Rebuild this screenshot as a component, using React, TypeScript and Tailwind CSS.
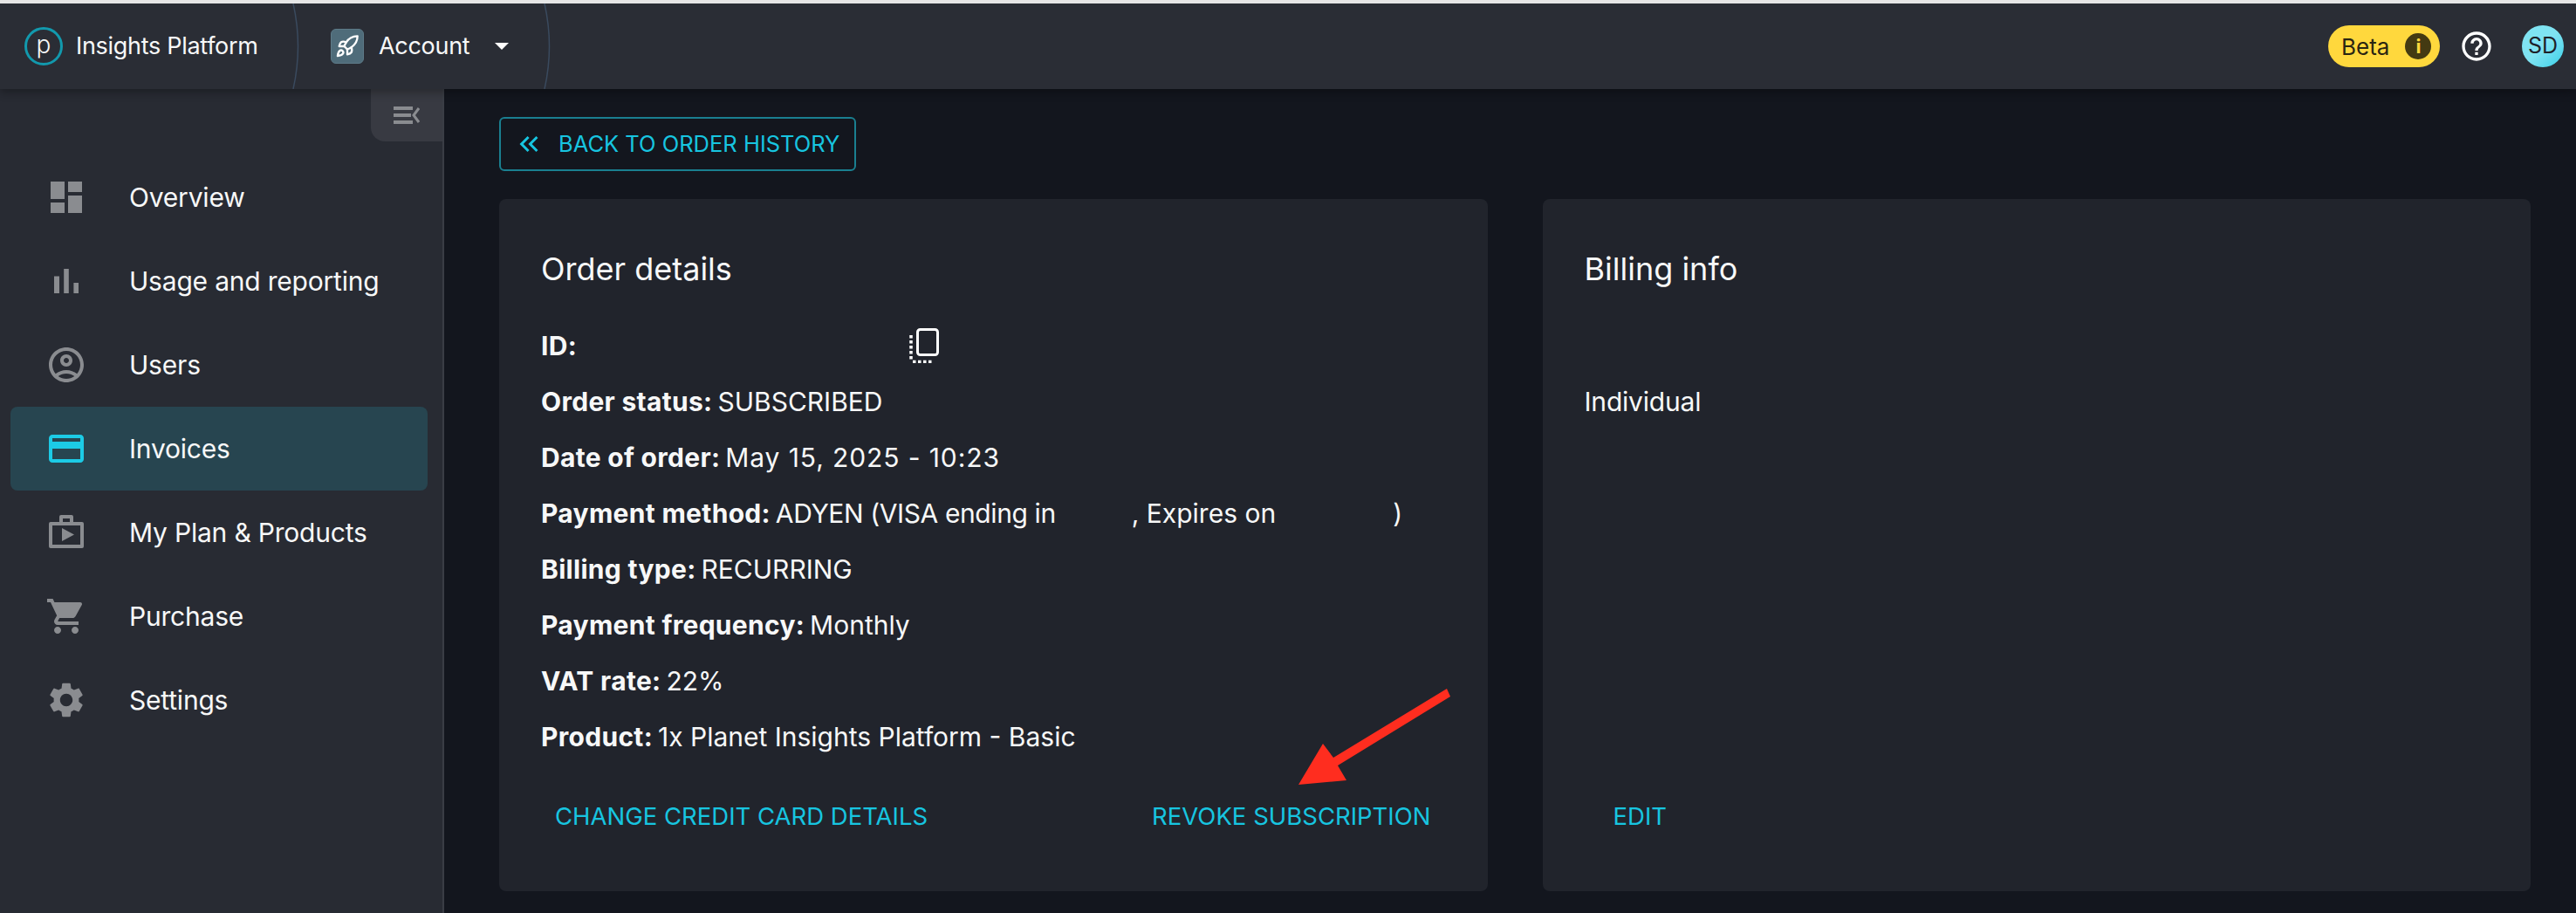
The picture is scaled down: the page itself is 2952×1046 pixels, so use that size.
import React from 'react';
import { Rocket } from 'lucide-react';

const navItems = [
  { label: 'Overview', d: 'M3 13h8V3H3v10zm0 8h8v-6H3v6zm10 0h8V11h-8v10zm0-18v6h8V3h-8z' },
  { label: 'Usage and reporting', d: 'M5 9.2h3V19H5zM10.6 5h2.8v14h-2.8zm5.6 8H19v6h-2.8z' },
  {
    label: 'Users',
    d: 'M12 2C6.48 2 2 6.48 2 12s4.48 10 10 10 10-4.48 10-10S17.52 2 12 2zM7.35 18.5C8.66 17.56 10.26 17 12 17s3.34.56 4.65 1.5c-1.31.94-2.91 1.5-4.65 1.5s-3.34-.56-4.65-1.5zm10.79-1.38C16.45 15.8 14.32 15 12 15s-4.45.8-6.14 2.12C4.7 15.73 4 13.95 4 12c0-4.42 3.58-8 8-8s8 3.58 8 8c0 1.95-.7 3.73-1.86 5.12zM12 6c-1.93 0-3.5 1.57-3.5 3.5S10.07 13 12 13s3.5-1.57 3.5-3.5S13.93 6 12 6zm0 5c-.83 0-1.5-.67-1.5-1.5S11.17 8 12 8s1.5.67 1.5 1.5S12.83 11 12 11z',
  },
  {
    label: 'Invoices',
    active: true,
    d: 'M20 4H4c-1.11 0-1.99.89-1.99 2L2 18c0 1.11.89 2 2 2h16c1.11 0 2-.89 2-2V6c0-1.11-.89-2-2-2zm0 14H4v-6h16v6zm0-10H4V6h16v2z',
  },
  {
    label: 'My Plan & Products',
    d: 'M9 2h6a1 1 0 0 1 1 1v3h5a1 1 0 0 1 1 1v13a1 1 0 0 1-1 1H3a1 1 0 0 1-1-1V7a1 1 0 0 1 1-1h5V3a1 1 0 0 1 1-1zM10 4v2h4V4zM4 8v11h16V8zM9.5 9.5l7 3.75-7 3.75z',
  },
  {
    label: 'Purchase',
    d: 'M7 18c-1.1 0-1.99.9-1.99 2S5.9 22 7 22s2-.9 2-2-.9-2-2-2zM1 2v2h2l3.6 7.59-1.35 2.45c-.16.28-.25.61-.25.96 0 1.1.9 2 2 2h12v-2H7.42c-.14 0-.25-.11-.25-.25l.03-.12.9-1.63h7.45c.75 0 1.41-.41 1.75-1.03l3.58-6.49c.08-.14.12-.31.12-.48 0-.55-.45-1-1-1H5.21l-.94-2H1zm16 16c-1.1 0-1.99.9-1.99 2s.89 2 1.99 2 2-.9 2-2-.9-2-2-2z',
  },
  {
    label: 'Settings',
    d: 'M19.14 12.94c.04-.3.06-.61.06-.94 0-.32-.02-.64-.07-.94l2.03-1.58c.18-.14.23-.41.12-.61l-1.92-3.32c-.12-.22-.37-.29-.59-.22l-2.39.96c-.5-.38-1.03-.7-1.62-.94l-.36-2.54c-.04-.24-.24-.41-.48-.41h-3.84c-.24 0-.43.17-.47.41l-.36 2.54c-.59.24-1.13.57-1.62.94l-2.39-.96c-.22-.08-.47 0-.59.22L2.74 8.87c-.12.21-.08.47.12.61l2.03 1.58c-.05.3-.09.63-.09.94s.02.64.07.94l-2.03 1.58c-.18.14-.23.41-.12.61l1.92 3.32c.12.22.37.29.59.22l2.39-.96c.5.38 1.03.7 1.62.94l.36 2.54c.05.24.24.41.48.41h3.84c.24 0 .44-.17.47-.41l.36-2.54c.59-.24 1.13-.56 1.62-.94l2.39.96c.22.08.47 0 .59-.22l1.92-3.32c.12-.22.07-.47-.12-.61l-2.01-1.58zM12 15.6c-1.98 0-3.6-1.62-3.6-3.6s1.62-3.6 3.6-3.6 3.6 1.62 3.6 3.6-1.62 3.6-3.6 3.6z',
  },
];

function HeaderArc() {
  return (
    <svg viewBox="0 0 10 98" className="absolute top-0 right-0 w-[10px] h-[98px]" fill="none">
      <path d="M1 0Q12 49 1 98" stroke="#3a4a5e" strokeWidth="1.5" />
    </svg>
  );
}

function Header() {
  return (
    <header className="relative z-10 flex items-center h-[98px] bg-[#2a2d35] shadow-[0_4px_10px_rgba(0,0,0,0.3)]">
      <div className="relative flex items-center w-[345px] h-full pl-[28px] gap-[15px]">
        <div className="flex items-center justify-center w-[44px] h-[44px] rounded-full border-[3px] border-[#1299ad] text-[28px] font-light leading-none pb-[5px]">
          p
        </div>
        <span className="text-[27px] tracking-[-0.3px]">Insights Platform</span>
        <HeaderArc />
      </div>
      <div className="relative flex items-center w-[288px] h-full pl-[34px]">
        <div className="flex items-center justify-center w-[38px] h-[40px] rounded-md bg-[#4f6c7a] border border-[#5d7a88]">
          <Rocket size={28} strokeWidth={2} color="#ffffff" />
        </div>
        <span className="ml-[17px] text-[27px] tracking-[-0.3px]">Account</span>
        <svg viewBox="0 0 16 8" className="ml-[29px] w-[16px] h-[8px]">
          <path d="M0 0h16L8 8z" fill="#ffffff" />
        </svg>
        <HeaderArc />
      </div>
      <div className="ml-auto flex items-center pr-[14px]">
        <div className="flex items-center h-[48px] w-[128px] pl-[15px] rounded-full bg-[#ffd83d] text-[#2a2512] text-[26px]">
          <span>Beta</span>
          <span className="ml-[18px] flex items-center justify-center w-[30px] h-[30px] rounded-full bg-[#443a12] text-[#ffd83d] text-[22px] font-bold leading-none">
            i
          </span>
        </div>
        <svg viewBox="0 0 24 24" className="ml-[22px] w-[40px] h-[40px]" fill="#ffffff">
          <path d="M11 18h2v-2h-2v2zm1-16C6.48 2 2 6.48 2 12s4.48 10 10 10 10-4.48 10-10S17.52 2 12 2zm0 18c-4.41 0-8-3.59-8-8s3.59-8 8-8 8 3.59 8 8-3.59 8-8 8zm0-14c-2.21 0-4 1.79-4 4h2c0-1.1.9-2 2-2s2 .9 2 2c0 2-3 1.75-3 5h2c0-2.25 3-2.5 3-5 0-2.21-1.79-4-4-4z" />
        </svg>
        <div className="ml-[32px] flex items-center justify-center w-[48px] h-[48px] rounded-full bg-gradient-to-br from-[#7fe3f2] from-50% to-[#2ed0e8] text-[#1d2129] text-[25px]">
          SD
        </div>
      </div>
    </header>
  );
}

function Sidebar() {
  return (
    <aside className="relative w-[509px] shrink-0 pt-[76px] bg-[#282b33] border-r-2 border-[#3a3d45]">
      <div className="absolute top-0 right-0 flex justify-center pt-[20px] w-[82px] h-[60px] rounded-bl-2xl bg-[#383a42]">
        <svg viewBox="0 0 30 20" className="w-[30px] h-[20px]" fill="#8a8c90">
          <path d="M0 0h22v4H0zM0 8h20v4H0zM0 16h22v4H0z" />
          <path d="M29 2l-6 8 6 8" fill="none" stroke="#8a8c90" strokeWidth="3" />
        </svg>
      </div>
      <nav className="flex flex-col ml-[12px] mr-[17px]">
        {navItems.map((item) => (
          <div
            key={item.label}
            className={`flex items-center h-[96px] pl-[40px] gap-[48px] rounded-lg text-[30px] tracking-[-0.2px] ${
              item.active ? 'bg-[#274550]' : ''
            }`}
          >
            <svg
              viewBox="0 0 24 24"
              className={`w-[48px] h-[48px] shrink-0 ${item.active ? 'fill-[#1ccbe6]' : 'fill-[#8a8c90]'}`}
            >
              <path fillRule="evenodd" d={item.d} />
            </svg>
            <span>{item.label}</span>
          </div>
        ))}
      </nav>
    </aside>
  );
}

function Row({ label, children }: { label: string; children?: React.ReactNode }) {
  return (
    <div className="flex items-center h-[64px] text-[30px] whitespace-pre">
      <span className="font-bold tracking-[0.3px] mr-[6px]">{label}</span>
      {children}
    </div>
  );
}

function TextButton({ children }: { children: React.ReactNode }) {
  return (
    <button className="px-[16px] h-[60px] text-[27.5px] uppercase text-[#17c5e0]">{children}</button>
  );
}

function Card({ title, children, actions }: { title: string; children: React.ReactNode; actions: React.ReactNode }) {
  return (
    <section className="flex flex-col h-[793px] pt-[58px] pl-[48px] pr-[49px] pb-[55px] rounded-lg bg-[#21242c]">
      <h2 className="text-[36px] leading-[44px] mb-[34px]">{title}</h2>
      <div className="flex-1">{children}</div>
      <div className="flex justify-between">{actions}</div>
    </section>
  );
}

export default function App() {
  return (
    <div className="flex flex-col h-screen overflow-hidden border-t-4 border-[#e6e6e6] bg-[#13161e] text-[#f7f8f8] font-[Inter,sans-serif]">
      <Header />
      <div className="flex flex-1 min-h-0">
        <Sidebar />
        <main className="relative flex-1 pt-[32px] pl-[63px] pr-[52px]">
          <button className="flex items-center h-[62px] w-[409px] pl-[14px] rounded-md border-2 border-[#1a7f90] text-[25.5px] uppercase text-[#17c5e0]">
            <svg viewBox="0 0 24 24" className="w-[36px] h-[36px] fill-[#17c5e0]">
              <path d="M17.59 18 19 16.59 14.42 12 19 7.41 17.59 6l-6 6zM11 18l1.41-1.41L7.83 12l4.58-4.59L11 6l-6 6z" />
            </svg>
            <span className="ml-[16px]">Back to order history</span>
          </button>
          <div className="grid grid-cols-2 gap-[63px] mt-[32px]">
            <Card
              title="Order details"
              actions={
                <>
                  <TextButton>Change credit card details</TextButton>
                  <TextButton>Revoke subscription</TextButton>
                </>
              }
            >
              <Row label="ID:">
                <svg viewBox="0 0 34 40" className="ml-[375px] w-[34px] h-[40px]" fill="none">
                  <rect x="9.5" y="1.5" width="23" height="29" rx="3" stroke="#ffffff" strokeWidth="3" />
                  <path d="M2 8v28M4 38.5h24" stroke="#ffffff" strokeWidth="3.5" strokeDasharray="3.5 2.5" />
                </svg>
              </Row>
              <Row label="Order status:">SUBSCRIBED</Row>
              <Row label="Date of order:">
                <span className="tracking-[0.9px]">May 15, 2025 - 10:23</span>
              </Row>
              <Row label="Payment method:">
                <span className="tracking-[-0.4px]">ADYEN (VISA ending in</span>
                <span className="w-[87px]" />, Expires on<span className="w-[134px]" />)
              </Row>
              <Row label="Billing type:">RECURRING</Row>
              <Row label="Payment frequency:">Monthly</Row>
              <Row label="VAT rate:">22%</Row>
              <Row label="Product:">1x Planet Insights Platform - Basic</Row>
            </Card>
            <Card
              title="Billing info"
              actions={
                <div className="ml-[17px]">
                  <TextButton>Edit</TextButton>
                </div>
              }
            >
              <div className="flex items-center h-[64px] mt-[64px] text-[30px] tracking-[-0.2px]">Individual</div>
            </Card>
          </div>
          {/* red annotation arrow pasted over the order card */}
          <svg
            viewBox="0 0 180 115"
            className="absolute top-[685px] left-[976px] w-[180px] h-[115px] fill-[#ff2d1f]"
          >
            <path d="M173 2 177 11 48 90 58 107 3 112 31 65 43 81z" />
          </svg>
        </main>
      </div>
    </div>
  );
}
